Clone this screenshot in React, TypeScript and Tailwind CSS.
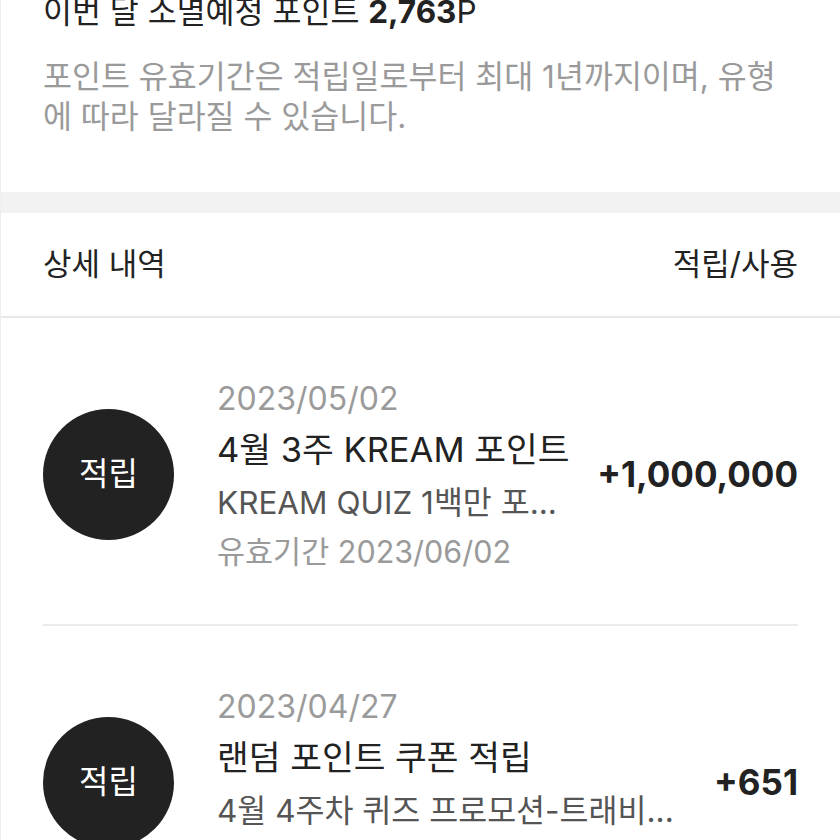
import React from "react";

const font = { fontFamily: 'Inter, "Noto Sans CJK KR", sans-serif' };

type Item = {
  date: string;
  title: string;
  sub: string;
  valid?: string;
  amount: string;
};

const items: Item[] = [
  {
    date: "2023/05/02",
    title: "4월 3주 KREAM 포인트",
    sub: "KREAM QUIZ 1백만 포...",
    valid: "유효기간 2023/06/02",
    amount: "+1,000,000",
  },
  {
    date: "2023/04/27",
    title: "랜덤 포인트 쿠폰 적립",
    sub: "4월 4주차 퀴즈 프로모션-트래비...",
    valid: "유효기간 2023/05/27",
    amount: "+651",
  },
];

function Row({ item, last }: { item: Item; last: boolean }) {
  return (
    <div className="px-[42px]">
      <div className={"flex items-center pt-[56px] pb-[50px] " + (last ? "" : "border-b-2 border-[#ebebeb]")}>
        <div className="w-[131px] h-[131px] rounded-full bg-[#222222] flex items-center justify-center shrink-0">
          <span className="text-white text-[32px] leading-none">적립</span>
        </div>
        <div className="flex-1 min-w-0 ml-[43px] flex flex-col">
          <div className="h-[50px] flex items-center text-[32px] text-[#9a9a9a] whitespace-nowrap">{item.date}</div>
          <div className="h-[52px] flex items-center text-[34.5px] text-[#222222] whitespace-nowrap">{item.title}</div>
          <div className="h-[54px] flex items-center text-[31.5px] text-[#555555] whitespace-nowrap">{item.sub}</div>
          <div className="h-[44px] flex items-center text-[30.5px] text-[#9a9a9a] whitespace-nowrap">{item.valid}</div>
        </div>
        <div className="text-[35px] font-bold text-[#222222] whitespace-nowrap pl-4">{item.amount}</div>
      </div>
    </div>
  );
}

export default function App() {
  return (
    <div style={font} className="w-[840px] h-[840px] overflow-hidden bg-white border-l border-[#eeeeee]">
      <div className="-mt-[8px] px-[42px] pb-[55px]">
        <div className="h-[40px] flex items-center text-[31.5px] text-[#222222] whitespace-nowrap">
          이번 달 소멸예정 포인트&nbsp;<span className="font-bold">2,763</span>P
        </div>
        <div className="mt-[25px] text-[31.5px] leading-[40px] text-[#9a9a9a] whitespace-nowrap">
          포인트 유효기간은 적립일로부터 최대 1년까지이며, 유형
          <br />
          에 따라 달라질 수 있습니다.
        </div>
      </div>
      <div className="h-[21px] bg-[#f2f2f2]" />
      <div className="h-[105px] px-[42px] flex items-center justify-between text-[31px] text-[#222222] border-b-2 border-[#e9e9e9]">
        <span>상세 내역</span>
        <span>적립/사용</span>
      </div>
      {items.map((it, i) => (
        <Row key={i} item={it} last={i === items.length - 1} />
      ))}
    </div>
  );
}
